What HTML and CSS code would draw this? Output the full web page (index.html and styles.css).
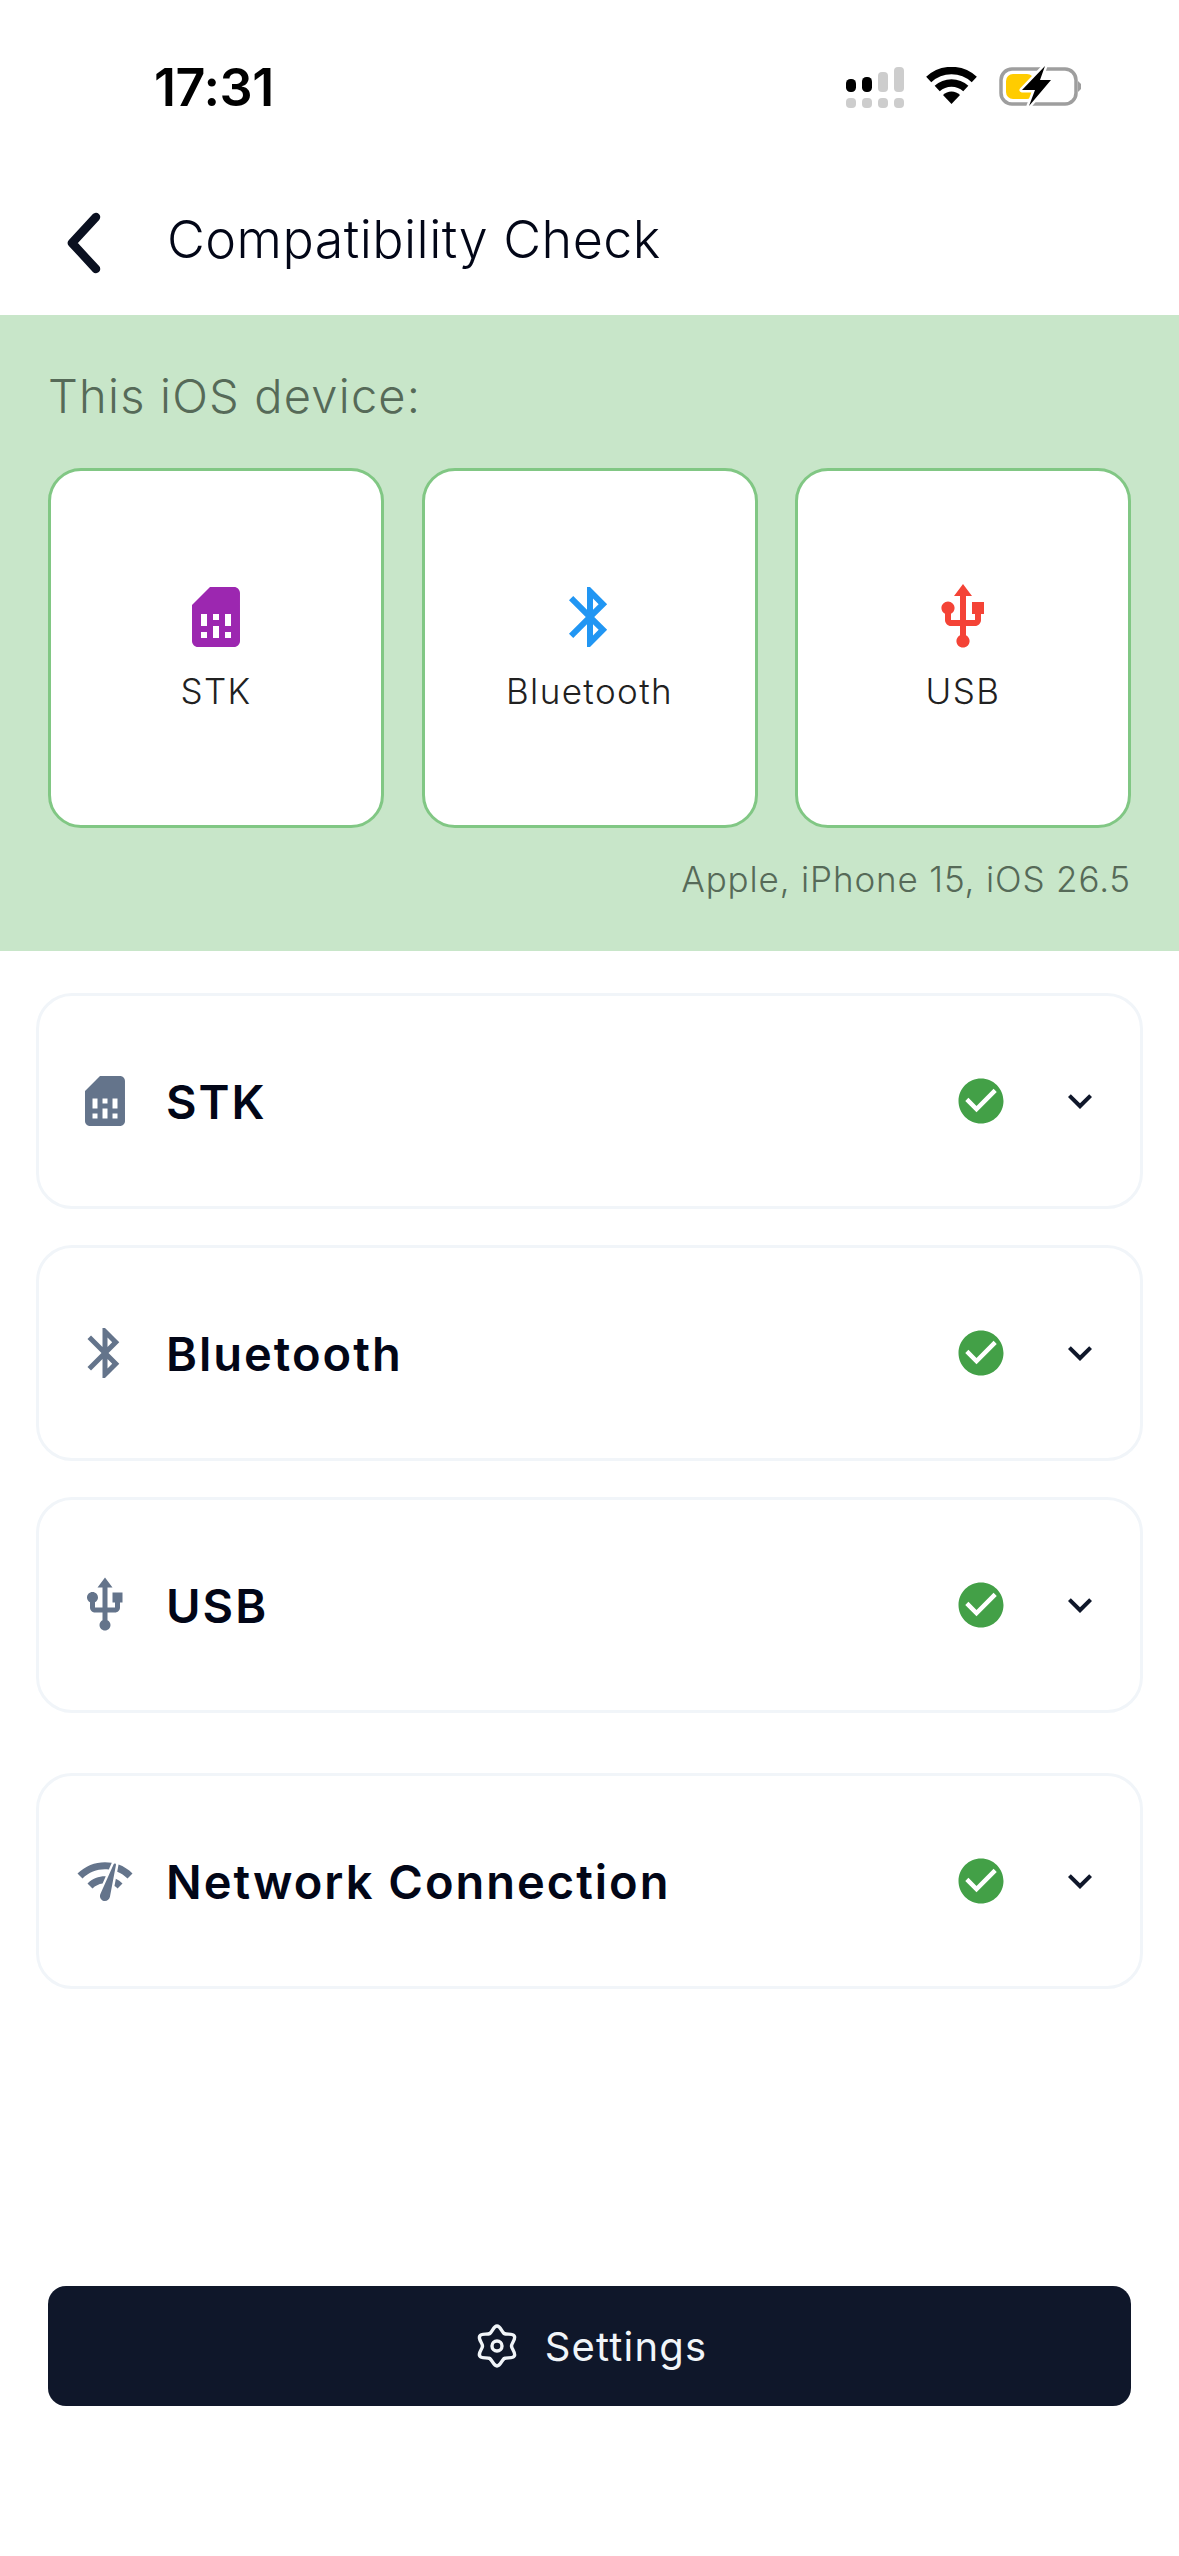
FILE: index.html
```
<!DOCTYPE html>
<html lang="en">
<head>
<meta charset="utf-8">
<title>Compatibility Check</title>
<link rel="stylesheet" href="styles.css">
</head>
<body>
<div class="page">
  <div class="status">
    <span class="time">17:31</span>
    <div class="status-icons">
      <svg class="sig" viewBox="0 0 58 41">
        <rect class="on" x="0" y="12" width="10" height="13" rx="4.5"/>
        <rect class="on" x="16" y="10" width="10" height="15" rx="4.5"/>
        <rect class="off" x="32" y="5" width="10" height="20" rx="4"/>
        <rect class="off" x="48" y="0" width="10" height="25" rx="4"/>
        <rect class="off" x="0" y="31" width="10" height="10" rx="4"/>
        <rect class="off" x="16" y="31" width="10" height="10" rx="4"/>
        <rect class="off" x="32" y="31" width="10" height="10" rx="4"/>
        <rect class="off" x="48" y="31" width="10" height="10" rx="4"/>
      </svg>
      <svg class="wifi" viewBox="0 0 51 37">
        <path d="M2.7 12.5A33.5 33.5 0 0 1 48.3 12.5" fill="none" stroke="#000" stroke-width="7.5"/>
        <path d="M11.2 21.6A21 21 0 0 1 39.8 21.6" fill="none" stroke="#000" stroke-width="7.5"/>
        <path d="M25.5 37L17 28A12 12 0 0 1 34 28Z" fill="#000"/>
      </svg>
      <svg class="batt" viewBox="0 0 82 42">
        <rect x="2" y="4" width="75" height="35" rx="11" fill="none" stroke="#9e9e9e" stroke-width="3.5"/>
        <path d="M79 16L82 19V24L79 27Z" fill="#9e9e9e"/>
        <rect x="7" y="9" width="28" height="25" rx="7" fill="#ffcc00"/>
        <path d="M46 1L23 25H36L30 41L52 15H41Z" fill="#000" stroke="#fff" stroke-width="5" stroke-linejoin="round" paint-order="stroke"/>
      </svg>
    </div>
  </div>

  <header class="topbar">
    <svg class="back" viewBox="0 0 35 62"><path d="M30 5L6 31L30 57" fill="none" stroke="#0a1020" stroke-width="8.5" stroke-linecap="round" stroke-linejoin="round"/></svg>
    <h1 class="title">Compatibility Check</h1>
  </header>

  <section class="banner">
    <p class="banner-title">This iOS device:</p>
    <div class="tiles">
      <div class="tile">
        <svg class="tile-icon purple" viewBox="0 0 24 24"><path d="M19.99 4c0-1.1-.89-2-1.99-2h-8L4 8v12c0 1.1.9 2 2 2h12c1.1 0 2-.9 2-2l-.01-16zM9 19H7v-2h2v2zm8 0h-2v-2h2v2zm-8-4H7v-4h2v4zm4 4h-2v-4h2v4zm0-6h-2v-2h2v2zm4 2h-2v-4h2v4z"/></svg>
        <span class="tile-label">STK</span>
      </div>
      <div class="tile">
        <svg class="tile-icon blue" viewBox="0 0 24 24"><path d="M17.71 7.71L12 2h-1v7.59L6.41 5 5 6.41 10.59 12 5 17.59 6.41 19 11 14.41V22h1l5.71-5.71-4.3-4.29 4.3-4.29zM13 5.83l1.88 1.88L13 9.59V5.83zm1.88 10.46L13 18.17v-3.76l1.88 1.88z"/></svg>
        <span class="tile-label">Bluetooth</span>
      </div>
      <div class="tile">
        <svg class="tile-icon red" viewBox="0 0 24 24"><path d="M15 7v4h1v2h-3V5h2l-3-4-3 4h2v8H8v-2.07c.7-.37 1.2-1.08 1.2-1.93 0-1.21-.99-2.2-2.2-2.2-1.21 0-2.2.99-2.2 2.2 0 .85.5 1.56 1.2 1.93V13c0 1.11.89 2 2 2h3v3.05c-.71.37-1.2 1.1-1.2 1.95 0 1.22.99 2.2 2.2 2.2 1.21 0 2.2-.98 2.2-2.2 0-.85-.49-1.58-1.2-1.95V15h3c1.11 0 2-.89 2-2v-2h1V7h-4z"/></svg>
        <span class="tile-label">USB</span>
      </div>
    </div>
    <p class="device">Apple, iPhone 15, iOS 26.5</p>
  </section>

  <div class="rows">
    <div class="row">
      <svg class="row-icon" viewBox="0 0 24 24"><path d="M19.99 4c0-1.1-.89-2-1.99-2h-8L4 8v12c0 1.1.9 2 2 2h12c1.1 0 2-.9 2-2l-.01-16zM9 19H7v-2h2v2zm8 0h-2v-2h2v2zm-8-4H7v-4h2v4zm4 4h-2v-4h2v4zm0-6h-2v-2h2v2zm4 2h-2v-4h2v4z"/></svg>
      <span class="row-label">STK</span>
      <svg class="ok" viewBox="0 0 24 24"><path d="M12 2C6.48 2 2 6.48 2 12s4.48 10 10 10 10-4.48 10-10S17.52 2 12 2zm-2 15l-5-5 1.41-1.41L10 14.17l7.59-7.59L19 8l-9 9z"/></svg>
      <svg class="more" viewBox="0 0 24 24"><path d="M16.59 8.59L12 13.17 7.41 8.59 6 10l6 6 6-6z"/></svg>
    </div>
    <div class="row">
      <svg class="row-icon" viewBox="0 0 24 24"><path d="M17.71 7.71L12 2h-1v7.59L6.41 5 5 6.41 10.59 12 5 17.59 6.41 19 11 14.41V22h1l5.71-5.71-4.3-4.29 4.3-4.29zM13 5.83l1.88 1.88L13 9.59V5.83zm1.88 10.46L13 18.17v-3.76l1.88 1.88z"/></svg>
      <span class="row-label">Bluetooth</span>
      <svg class="ok" viewBox="0 0 24 24"><path d="M12 2C6.48 2 2 6.48 2 12s4.48 10 10 10 10-4.48 10-10S17.52 2 12 2zm-2 15l-5-5 1.41-1.41L10 14.17l7.59-7.59L19 8l-9 9z"/></svg>
      <svg class="more" viewBox="0 0 24 24"><path d="M16.59 8.59L12 13.17 7.41 8.59 6 10l6 6 6-6z"/></svg>
    </div>
    <div class="row">
      <svg class="row-icon" viewBox="0 0 24 24"><path d="M15 7v4h1v2h-3V5h2l-3-4-3 4h2v8H8v-2.07c.7-.37 1.2-1.08 1.2-1.93 0-1.21-.99-2.2-2.2-2.2-1.21 0-2.2.99-2.2 2.2 0 .85.5 1.56 1.2 1.93V13c0 1.11.89 2 2 2h3v3.05c-.71.37-1.2 1.1-1.2 1.95 0 1.22.99 2.2 2.2 2.2 1.21 0 2.2-.98 2.2-2.2 0-.85-.49-1.58-1.2-1.95V15h3c1.11 0 2-.89 2-2v-2h1V7h-4z"/></svg>
      <span class="row-label">USB</span>
      <svg class="ok" viewBox="0 0 24 24"><path d="M12 2C6.48 2 2 6.48 2 12s4.48 10 10 10 10-4.48 10-10S17.52 2 12 2zm-2 15l-5-5 1.41-1.41L10 14.17l7.59-7.59L19 8l-9 9z"/></svg>
      <svg class="more" viewBox="0 0 24 24"><path d="M16.59 8.59L12 13.17 7.41 8.59 6 10l6 6 6-6z"/></svg>
    </div>
    <div class="row row-network">
      <svg class="row-icon" viewBox="0 0 24 24"><path d="M15.9 5c-.17 0-.32.09-.41.23l-.07.15-5.18 11.65c-.16.29-.26.61-.26.96 0 1.11.9 2.01 2.01 2.01.96 0 1.77-.68 1.96-1.59l.01-.03L16.4 5.5c0-.28-.22-.5-.5-.5zM1 9l2 2c2.88-2.88 6.79-4.08 10.53-3.62l1.19-2.68C9.89 3.84 4.74 5.27 1 9zm20 2l2-2c-1.64-1.64-3.54-2.82-5.58-3.57l-.53 2.82c1.5.62 2.9 1.53 4.11 2.75zm-4 4l2-2c-.8-.8-1.7-1.42-2.66-1.89l-.55 2.92c.42.27.83.59 1.21.97zM5 13l2 2c1.13-1.13 2.56-1.79 4.03-2l1.28-2.88c-2.63-.08-5.3.87-7.31 2.88z"/></svg>
      <span class="row-label">Network Connection</span>
      <svg class="ok" viewBox="0 0 24 24"><path d="M12 2C6.48 2 2 6.48 2 12s4.48 10 10 10 10-4.48 10-10S17.52 2 12 2zm-2 15l-5-5 1.41-1.41L10 14.17l7.59-7.59L19 8l-9 9z"/></svg>
      <svg class="more" viewBox="0 0 24 24"><path d="M16.59 8.59L12 13.17 7.41 8.59 6 10l6 6 6-6z"/></svg>
    </div>
  </div>

  <button class="settings" type="button">
    <svg class="gear" viewBox="-22 -22 44 44">
      <defs><path id="lobe" d="M-7.25 -12.56C-4.65 -14.06 -3.5 -20 0 -20C3.5 -20 4.65 -14.06 7.25 -12.56"/></defs>
      <use href="#lobe"/>
      <use href="#lobe" transform="rotate(60)"/>
      <use href="#lobe" transform="rotate(120)"/>
      <use href="#lobe" transform="rotate(180)"/>
      <use href="#lobe" transform="rotate(240)"/>
      <use href="#lobe" transform="rotate(300)"/>
      <circle cx="0" cy="0" r="5"/>
    </svg>
    <span>Settings</span>
  </button>
</div>
</body>
</html>
```
FILE: styles.css
```
* { box-sizing: border-box; }
html, body { margin: 0; padding: 0; background: #fff; }
body { font-family: Inter, "Noto Sans", sans-serif; color: #0f172a; }
.page { width: 1179px; height: 2556px; display: flex; flex-direction: column; overflow: hidden; }

.status { height: 150px; padding: 65px 98px 0 154px; display: flex; justify-content: space-between; align-items: flex-start; }
.time { font-size: 52px; font-weight: 600; line-height: 46px; color: #000; letter-spacing: -.4px; }
.status-icons { display: flex; align-items: flex-start; gap: 22px; margin-top: 2px; }
.sig { width: 58px; height: 41px; }
.sig .on { fill: #000; }
.sig .off { fill: #cdcdcd; }
.wifi { width: 51px; height: 37px; }
.batt { width: 82px; height: 42px; margin-top: -2px; }

.topbar { height: 165px; display: flex; align-items: center; padding: 21px 0 0 66px; }
.back { width: 35px; height: 62px; flex: none; }
.title { margin: 0 0 6px 66px; font-size: 52px; font-weight: 300; line-height: 64px; letter-spacing: .45px; color: #020617; }

.banner { height: 636px; background: #c8e6c9; padding: 52px 48px 0; }
.banner-title { margin: 0 0 43px; font-size: 47px; font-weight: 300; line-height: 58px; letter-spacing: 1.2px; color: #566a58; }
.tiles { display: flex; justify-content: space-between; }
.tile { width: 336px; height: 360px; background: #fff; border: 3px solid #81c784; border-radius: 33px; display: flex; flex-direction: column; align-items: center; justify-content: center; }
.tile-icon { width: 72px; height: 72px; display: block; }
.tile-label { margin-top: 13px; font-size: 35px; font-weight: 300; line-height: 50px; letter-spacing: 1.4px; color: #212121; }
.purple { fill: #9c27b0; }
.blue { fill: #2196f3; }
.red { fill: #f44336; }
.device { margin: 26px 0 0; text-align: right; font-size: 35px; font-weight: 300; line-height: 50px; letter-spacing: .85px; color: #566a58; }

.rows { margin: 42px 36px 0; display: flex; flex-direction: column; gap: 36px; }
.row { height: 216px; border: 3px solid #f1f5f9; border-radius: 36px; background: #fff; display: flex; align-items: center; padding: 0 36px; }
.row-network { margin-top: 24px; }
.row-icon { width: 60px; height: 60px; flex: none; fill: #64748b; }
.row-label { margin: 2px 0 0 31px; flex: 1; font-size: 47px; font-weight: 600; line-height: 60px; letter-spacing: 2px; color: #020617; }
.ok { width: 54px; height: 54px; flex: none; fill: #43a047; }
.more { width: 48px; height: 48px; flex: none; margin-left: 48px; fill: #0f172a; }

.settings { margin: auto 48px 150px; height: 120px; border: 0; border-radius: 18px; background: #0f172a; display: flex; align-items: center; justify-content: center; gap: 26px; font-family: inherit; font-size: 40px; font-weight: 400; letter-spacing: 1.2px; color: #f1f5f9; padding: 0 0 0 3px; }
.gear { width: 44px; height: 44px; flex: none; fill: none; stroke: #f1f5f9; stroke-width: 3.4; stroke-linecap: round; }
```
